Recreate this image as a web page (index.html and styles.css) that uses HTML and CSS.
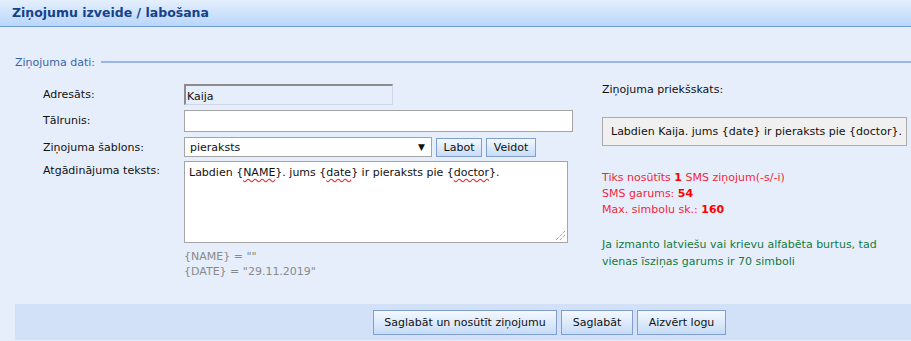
FILE: index.html
```html
<!DOCTYPE html>
<html lang="lv">

<head>
    <meta charset="utf-8" />
    <title>Ziņojumu izveide / labošana</title>
    <link rel="stylesheet" href="styles.css">
</head>

<body>
    <div class="title-bar">Ziņojumu izveide / labošana</div>

    <div class="legend">
        <span>Ziņojuma dati:</span>
        <div class="legend-line"></div>
    </div>

    <div class="content">
        <div class="form">
            <div class="row row-adresats">
                <label>Adresāts:</label>
                <input type="text" class="input-readonly" value="Kaija" readonly />
            </div>
            <div class="row row-phone">
                <label>Tālrunis:</label>
                <input type="text" class="input-phone" />
            </div>
            <div class="row row-template">
                <label>Ziņojuma šablons:</label>
                <div class="select">
                    <span>pieraksts</span>
                    <span class="arrow">&#9660;</span>
                </div>
                <button class="btn btn-small btn-labot">Labot</button>
                <button class="btn btn-small btn-veidot">Veidot</button>
            </div>
            <div class="row row-text">
                <label>Atgādinājuma teksts:</label>
                <div class="textarea">
                    Labdien <span class="var">{<u>NAME</u>}</span>. jums <span class="var">{<u>date</u>}</span> ir pieraksts pie <span class="var">{<u>doctor</u>}</span>.
                    <svg class="grip" width="11" height="11" viewBox="0 0 11 11">
                        <path d="M10 1 L1 10 M10 5 L5 10" stroke="#777" stroke-width="1" stroke-dasharray="1 1" />
                    </svg>
                </div>
            </div>
            <div class="hints">
                <div>{NAME} = ""</div>
                <div>{DATE} = "29.11.2019"</div>
            </div>
        </div>

        <div class="preview">
            <div class="preview-title">Ziņojuma priekšskats:</div>
            <div class="preview-box">Labdien Kaija. jums {date} ir pieraksts pie {doctor}.</div>
            <div class="stats">
                <div>Tiks nosūtīts <b>1</b> SMS ziņojum(-s/-i)</div>
                <div>SMS garums: <b>54</b></div>
                <div>Max. simbolu sk.: <b>160</b></div>
            </div>
            <div class="note">Ja izmanto latviešu vai krievu alfabēta burtus, tad vienas īsziņas garums ir 70 simboli</div>
        </div>
    </div>

    <div class="footer">
        <button class="btn btn-main">Saglabāt un nosūtīt ziņojumu</button>
        <button class="btn btn-save">Saglabāt</button>
        <button class="btn btn-close">Aizvērt logu</button>
    </div>
</body>

</html>
```

FILE: styles.css
```css
html {
    font-family: "DejaVu Sans", Verdana, sans-serif;
    font-size: 11px;
    color: #111;
}

body {
    margin: 0;
    width: 911px;
    height: 341px;
    overflow: hidden;
    background: #e6eefc;
}

.title-bar {
    height: 26px;
    line-height: 26px;
    padding-left: 12px;
    font-size: 12.5px;
    font-weight: bold;
    color: #15428b;
    background: linear-gradient(#e4effd, #b9d6fa);
    border-bottom: 1px solid #6c9ad8;
}

.legend {
    display: flex;
    align-items: center;
    margin-top: 27px;
    padding-left: 15px;
    height: 16px;
}

.legend span {
    color: #3d63a8;
}

.legend-line {
    flex: 1;
    margin-left: 6px;
    height: 2px;
    background: #98b6e6;
}

.content {
    display: flex;
    margin-top: 14px;
    height: 200px;
}

.form {
    box-sizing: border-box;
    width: 559px;
    flex-shrink: 0;
    padding-left: 43px;
}

.row {
    display: flex;
    align-items: flex-start;
}

.row > * {
    flex-shrink: 0;
}

.row label {
    width: 141px;
    line-height: 21px;
}

input {
    font-family: inherit;
    font-size: 11px;
    box-sizing: border-box;
    margin: 0;
}

.input-readonly {
    width: 209px;
    height: 21px;
    padding: 2px 1px 0;
    background: #e6eefc;
    border: 1px solid #ccd6e6;
    border-top: 2px solid #8c8c8c;
    border-left: 2px solid #8c8c8c;
    color: #111;
}

.row-phone {
    margin-top: 5px;
}

.input-phone {
    width: 389px;
    height: 22px;
    background: #fff;
    border: 1px solid #a5a5a5;
}

.row-template {
    margin-top: 5px;
}

.select {
    box-sizing: border-box;
    width: 248px;
    height: 20px;
    display: flex;
    justify-content: space-between;
    align-items: center;
    padding: 0 6px 0 5px;
    background: #fff;
    border: 1px solid #a5a5a5;
}

.arrow {
    font-size: 9px;
    color: #111;
}

.btn {
    font-family: inherit;
    font-size: 11px;
    color: #111;
    background: linear-gradient(#f4f8fe, #c7dcf8);
    border: 1px solid #7f9fd0;
    border-radius: 0;
    padding: 0;
    margin: 0;
    white-space: nowrap;
}

.btn-small {
    height: 19px;
    margin-top: 1px;
}

.btn-labot {
    width: 46px;
    margin-left: 4px;
}

.btn-veidot {
    width: 50px;
    margin-left: 4px;
}

.row-text {
    margin-top: 3px;
}

.row-text label {
    line-height: 20px;
}

.textarea {
    position: relative;
    box-sizing: border-box;
    width: 384px;
    height: 82px;
    padding: 3px 4px;
    background: #fff;
    border: 1px solid #a5a5a5;
    line-height: 16px;
}

.var u {
    text-decoration: underline wavy #e22;
    text-underline-offset: 2px;
}

.grip {
    position: absolute;
    right: 1px;
    bottom: 1px;
}

.hints {
    margin-left: 141px;
    margin-top: 6px;
    color: #8a8a8a;
    line-height: 15px;
}

.preview {
    flex: 1;
    padding-left: 43px;
    padding-right: 4px;
    margin-top: -2px;
}

.preview-title {
    line-height: 16px;
}

.preview-box {
    margin-top: 19px;
    height: 27px;
    line-height: 27px;
    padding-left: 8px;
    background: #f0f0f0;
    border: 1px solid #ababab;
    white-space: nowrap;
}

.stats {
    margin-top: 24px;
    color: #f4253a;
    line-height: 16px;
}

.stats b {
    color: #f00;
}

.note {
    margin-top: 18px;
    color: #137a3c;
    line-height: 17px;
    padding-right: 20px;
}

.footer {
    display: flex;
    align-items: center;
    margin-left: 15px;
    margin-top: 20px;
    height: 36px;
    padding-left: 358px;
    background: #d2e0f8;
}

.footer .btn {
    height: 25px;
}

.btn-main {
    width: 184px;
}

.btn-save {
    margin-left: 4px;
    width: 72px;
}

.btn-close {
    margin-left: 4px;
    width: 89px;
}
```
